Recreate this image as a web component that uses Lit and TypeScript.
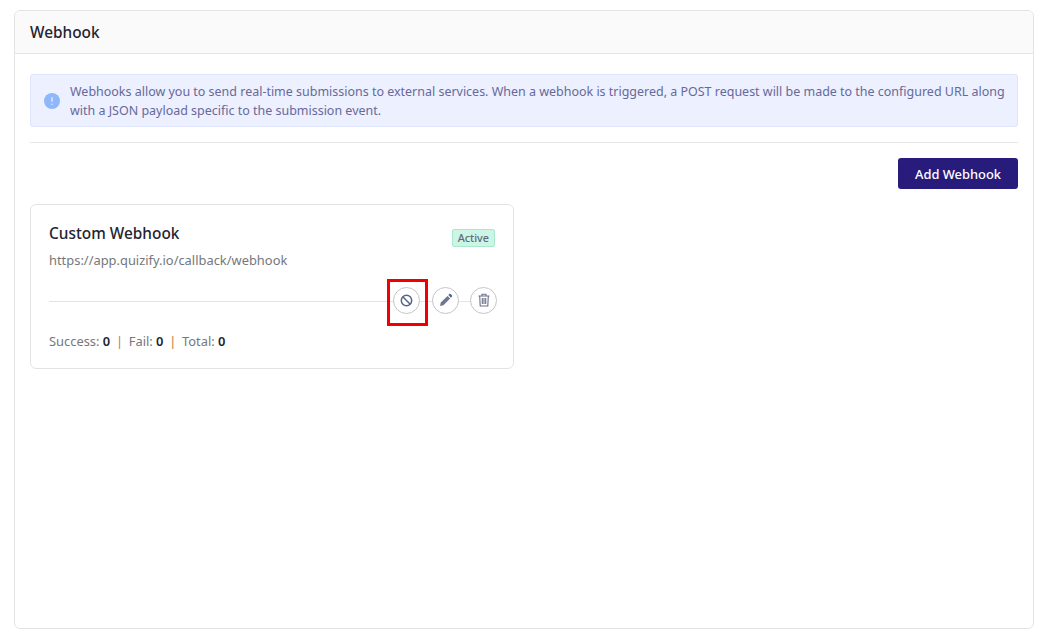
import { LitElement, html, css } from "lit";
import { customElement } from "lit/decorators.js";

@customElement("app-root")
export class AppRoot extends LitElement {
  static styles = css`
    :host { display: block; height: 643px; box-sizing: border-box; padding: 10px 14px 14px; background: #fff;
      font-family: "Noto Sans", "Liberation Sans", sans-serif; color: #1f2130; }
    * { box-sizing: border-box; }
    .panel { height: 619px; border: 1px solid #e1e3e6; border-radius: 6px; overflow: hidden; }
    .head { height: 43px; background: #fafafa; border-bottom: 1px solid #e3e5e8; padding: 0 15px; display: flex; align-items: center; font-size: 15.4px; font-weight: 500; color: #22242f; }
    .body { padding: 20px 15px; }
    .alert { height: 53px; background: #edf0ff; border: 1px solid #dfe5fa; border-radius: 3px; padding: 0 8px 0 13px; display: flex; align-items: center; gap: 10px; font-size: 12.47px; line-height: 19px; color: #66699a; }
    .alert svg { flex: none; }
    .sep { height: 1px; background: #e5e6e9; margin-top: 15px; }
    .actions { display: flex; justify-content: flex-end; margin-top: 15px; }
    .add { width: 120px; height: 31px; border: 0; border-radius: 3px; background: #271b7c; color: #fff; font: 500 12.9px "Noto Sans", "Liberation Sans", sans-serif; }
    .card { width: 484px; height: 165px; margin-top: 15px; border: 1px solid #e1e3e6; border-radius: 6px; padding: 18px 18px 0; }
    .top { display: flex; justify-content: space-between; }
    .title { font-size: 15.4px; line-height: 21px; font-weight: 500; color: #22242f; }
    .url { font-size: 12.9px; line-height: 18px; margin-top: 7px; color: #76777c; }
    .badge { height: 18px; margin: 6px 0 0; padding: 0 5px; font-size: 10.8px; line-height: 16px; font-weight: 500; background: #cdf5e6; border: 1px solid #a9e8cd; border-radius: 2px; color: #5f6b7c; }
    .rule { display: flex; align-items: center; justify-content: flex-end; gap: 11px; height: 28px; margin: 17px -2px 0 0; position: relative; }
    .rule::before { content: ""; position: absolute; left: 0; right: 0; top: 15px; height: 1px; background: #e3e4e7; }
    .circle { position: relative; width: 27px; height: 27px; border-radius: 50%; background: #fff; border: 1px solid #c4c5c8; display: flex; align-items: center; justify-content: center; }
    .first { margin-right: 1px; }
    .mark { position: absolute; left: -7px; top: -9px; width: 41px; height: 47px; border: 3px solid #f00000; }
    .stats { margin-top: 18px; font-size: 12.9px; line-height: 18px; color: #76777c; }
    .stats b { font-weight: 600; color: #22242f; }
    .pipe { color: #b97a3a; margin: 0 5.7px; }
  `;

  render() {
    return html`
      <div class="panel">
        <div class="head">Webhook</div>
        <div class="body">
          <div class="alert">
            <svg width="16" height="16" viewBox="0 0 16 16"><circle cx="8" cy="8" r="8" fill="#8fb8fb"/><rect x="7.300" y="4" width="1.400" height="5" rx=".7" fill="#dfeaff"/><circle cx="8" cy="11.200" r=".8" fill="#dfeaff"/></svg>
            <div>Webhooks allow you to send real-time submissions to external services. When a webhook is triggered, a POST request will be made to the configured URL along with a JSON payload specific to the submission event.</div>
          </div>
          <div class="sep"></div>
          <div class="actions"><button class="add">Add Webhook</button></div>
          <div class="card">
            <div class="top">
              <div>
                <div class="title">Custom Webhook</div>
                <div class="url">https://app.quizify.io/callback/webhook</div>
              </div>
              <div class="badge">Active</div>
            </div>
            <div class="rule">
              <div class="circle first">
                <svg width="13" height="13" viewBox="0 0 13 13" fill="none" stroke="#56668a" stroke-width="1.500"><circle cx="6.500" cy="6.500" r="5.200"/><path d="M2.800 2.800l7.400 7.400"/></svg>
                <div class="mark"></div>
              </div>
              <div class="circle">
                <svg width="14" height="14" viewBox="0 0 14 14"><path d="M1 13l.8-3.400 6.700-6.700 2.600 2.600-6.700 6.700z" fill="#6d7791"/><path d="M9.300 2.100l1-1a1 1 0 0 1 1.400 0l1.200 1.200a1 1 0 0 1 0 1.400l-1 1z" fill="#56668a"/></svg>
              </div>
              <div class="circle">
                <svg width="12" height="14" viewBox="0 0 12 14" fill="none" stroke="#6b7088" stroke-width="1.100"><path d="M.5 3h11M4 3V1.200h4V3M1.700 3l.5 10h7.600l.5-10" /><path d="M4.300 5v6M6 5v6M7.700 5v6"/></svg>
              </div>
            </div>
            <div class="stats">Success: <b>0</b><span class="pipe">|</span>Fail: <b>0</b><span class="pipe">|</span>Total: <b>0</b></div>
          </div>
        </div>
      </div>
    `;
  }
}
